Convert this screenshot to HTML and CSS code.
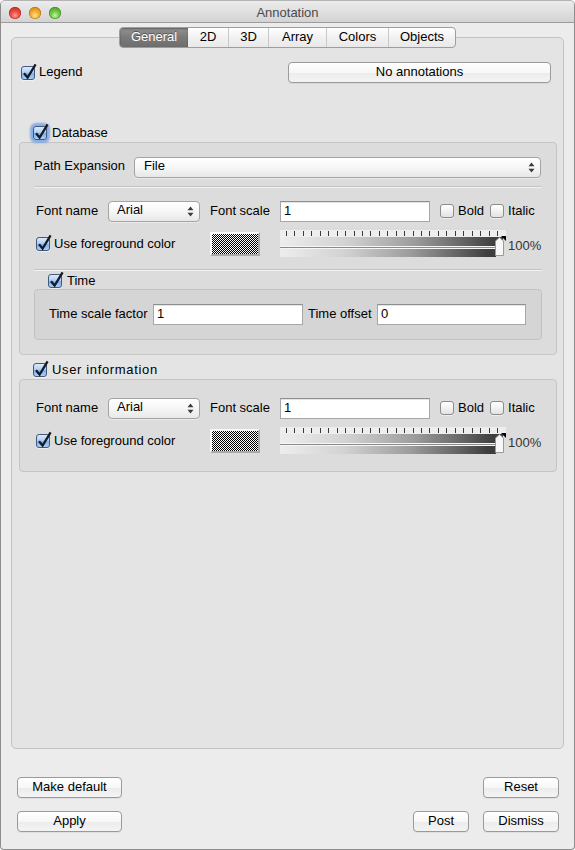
FILE: index.html
```html
<!DOCTYPE html>
<html>
<head>
<meta charset="utf-8">
<title>Annotation</title>
<link rel="stylesheet" href="styles.css">
</head>
<body>
<div class="window">
  <div class="titlebar">
    <div class="lights"><span class="light red"></span><span class="light yellow"></span><span class="light green"></span></div>
    <div class="title">Annotation</div>
    <div></div>
  </div>

  <div class="tabs">
    <div class="tabgroup">
      <div class="tab active t-general">General</div>
      <div class="tab t-2d">2D</div>
      <div class="tab sep t-3d">3D</div>
      <div class="tab sep t-array">Array</div>
      <div class="tab sep t-colors">Colors</div>
      <div class="tab sep t-objects">Objects</div>
    </div>
  </div>

  <div class="pane">
    <div class="legend-row">
      <span class="cb on"><svg class="tick" viewBox="0 0 14 14"><path d="M3 7.2 L6.6 11.6 L14.6 -1.6"/></svg></span>
      <span class="lbl ml4">Legend</span>
      <div class="btn btn-annot">No annotations</div>
    </div>

    <div class="group-title db-title">
      <span class="cb on focus"><svg class="tick" viewBox="0 0 14 14"><path d="M3 7.2 L6.6 11.6 L14.6 -1.6"/></svg></span>
      <span class="lbl ml5">Database</span>
    </div>
    <div class="group db-group">
      <div class="row path-row">
        <span class="lbl w-pe">Path Expansion</span>
        <div class="combo combo-path"><span>File</span><svg class="arrows" viewBox="0 0 7 11"><path d="M0.5 4.2 L3.5 0.6 L6.5 4.2 Z M0.5 6.8 L3.5 10.4 L6.5 6.8 Z"/></svg></div>
      </div>
      <div class="sep-line sep1"></div>
      <div class="row font-row">
        <span class="lbl w-fn">Font name</span>
        <div class="combo combo-font"><span>Arial</span><svg class="arrows" viewBox="0 0 7 11"><path d="M0.5 4.2 L3.5 0.6 L6.5 4.2 Z M0.5 6.8 L3.5 10.4 L6.5 6.8 Z"/></svg></div>
        <span class="lbl w-fs">Font scale</span>
        <div class="field w-scale">1</div>
        <span class="cb ml10"></span><span class="lbl ml4">Bold</span>
        <span class="cb ml6"></span><span class="lbl ml4">Italic</span>
      </div>
      <div class="row color-row">
        <span class="cb on"><svg class="tick" viewBox="0 0 14 14"><path d="M3 7.2 L6.6 11.6 L14.6 -1.6"/></svg></span>
        <span class="lbl ml4 w-fg">Use foreground color</span>
        <div class="swatch"></div>
        <div class="slider">
          <div class="ticks"><i></i><i></i><i></i><i></i><i></i><i></i><i></i><i></i><i></i><i></i><i></i><i></i><i></i><i></i><i></i><i></i><i></i><i></i><i></i><i></i><i></i><i></i><i></i><i></i><i></i><i></i></div>
          <div class="band band1"></div>
          <div class="groove"></div>
          <div class="band band2"></div>
          <svg class="handle" viewBox="0 0 12 22"><path class="corner" d="M6 0 L11 0 L11 5 Z"/><path class="knob" d="M0.5 5 L4.5 1.5 L8.5 5 L8.5 19.5 L0.5 19.5 Z"/></svg>
        </div>
        <span class="pct">100%</span>
      </div>
      <div class="sep-line sep2"></div>
      <div class="group-title time-title">
        <span class="cb on"><svg class="tick" viewBox="0 0 14 14"><path d="M3 7.2 L6.6 11.6 L14.6 -1.6"/></svg></span>
        <span class="lbl ml5">Time</span>
      </div>
      <div class="group time-group">
        <div class="row time-row">
          <span class="lbl w-tsf">Time scale factor</span>
          <div class="field w-tsfield">1</div>
          <span class="lbl w-to">Time offset</span>
          <div class="field grow">0</div>
        </div>
      </div>
    </div>

    <div class="group-title ui-title">
      <span class="cb on"><svg class="tick" viewBox="0 0 14 14"><path d="M3 7.2 L6.6 11.6 L14.6 -1.6"/></svg></span>
      <span class="lbl ml5 wide-title">User information</span>
    </div>
    <div class="group ui-group">
      <div class="row font-row">
        <span class="lbl w-fn">Font name</span>
        <div class="combo combo-font"><span>Arial</span><svg class="arrows" viewBox="0 0 7 11"><path d="M0.5 4.2 L3.5 0.6 L6.5 4.2 Z M0.5 6.8 L3.5 10.4 L6.5 6.8 Z"/></svg></div>
        <span class="lbl w-fs">Font scale</span>
        <div class="field w-scale">1</div>
        <span class="cb ml10"></span><span class="lbl ml4">Bold</span>
        <span class="cb ml6"></span><span class="lbl ml4">Italic</span>
      </div>
      <div class="row color-row">
        <span class="cb on"><svg class="tick" viewBox="0 0 14 14"><path d="M3 7.2 L6.6 11.6 L14.6 -1.6"/></svg></span>
        <span class="lbl ml4 w-fg">Use foreground color</span>
        <div class="swatch"></div>
        <div class="slider">
          <div class="ticks"><i></i><i></i><i></i><i></i><i></i><i></i><i></i><i></i><i></i><i></i><i></i><i></i><i></i><i></i><i></i><i></i><i></i><i></i><i></i><i></i><i></i><i></i><i></i><i></i><i></i><i></i></div>
          <div class="band band1"></div>
          <div class="groove"></div>
          <div class="band band2"></div>
          <svg class="handle" viewBox="0 0 12 22"><path class="corner" d="M6 0 L11 0 L11 5 Z"/><path class="knob" d="M0.5 5 L4.5 1.5 L8.5 5 L8.5 19.5 L0.5 19.5 Z"/></svg>
        </div>
        <span class="pct">100%</span>
      </div>
    </div>
  </div>

  <div class="footer">
    <div class="frow">
      <div class="btn b-wide">Make default</div>
      <div class="btn b-mid">Reset</div>
    </div>
    <div class="frow frow2">
      <div class="btn b-wide">Apply</div>
      <div class="fright">
        <div class="btn b-small">Post</div>
        <div class="btn b-mid">Dismiss</div>
      </div>
    </div>
  </div>
</div>
</body>
</html>
```

FILE: styles.css
```css
* { box-sizing: border-box; }
html { background: #ffffff; }
body {
  margin: 0;
  width: 575px;
  height: 850px;
  font-family: "Liberation Sans", Arial, sans-serif;
  font-size: 13px;
  color: #000;
}
.window {
  width: 575px;
  height: 850px;
  background: #ececec;
  border: 1px solid #8d8d8d;
  border-top-color: #b4b4b4;
  border-radius: 5px 5px 4px 4px;
  overflow: hidden;
}

/* title bar */
.titlebar {
  height: 22px;
  display: grid;
  grid-template-columns: 1fr auto 1fr;
  background: linear-gradient(#ececec, #d3d3d3);
  border-bottom: 1px solid #9c9c9c;
}
.lights { display: flex; gap: 8px; padding: 6px 0 0 8px; }
.light {
  width: 12px; height: 12px; border-radius: 50%;
  display: block;
}
.red {
  background: radial-gradient(circle at 50% 70%, #ff9f90 0, #f0554a 35%, #d0322a 75%, #a8261f 100%);
  box-shadow: inset 0 0 0 0.5px #9e2a24;
}
.yellow {
  background: radial-gradient(circle at 50% 70%, #ffe39a 0, #f4b43a 35%, #d88e16 75%, #a86d10 100%);
  box-shadow: inset 0 0 0 0.5px #a26c14;
}
.green {
  background: radial-gradient(circle at 50% 70%, #c8f5a8 0, #78cc4c 35%, #4fa92e 75%, #3a8722 100%);
  box-shadow: inset 0 0 0 0.5px #3b7d25;
}
.title {
  line-height: 22px;
  padding-top: 1px;
  color: #4a4a4a;
  font-size: 13px;
}

/* tabs */
.tabs {
  display: flex;
  justify-content: center;
  margin-top: 4px;
  margin-bottom: -11px;
  position: relative;
  z-index: 1;
}
.tabgroup {
  display: flex;
  height: 21px;
  border: 1px solid #9d9d9d;
  border-radius: 4px;
  overflow: hidden;
  background: linear-gradient(#ffffff, #f1f1f1 50%, #e9e9e9);
}
.tab {
  line-height: 18px;
  text-align: center;
  color: #000;
}
.tab.sep { border-left: 1px solid #c8c8c8; }
.tab.active {
  background: linear-gradient(#929292, #7a7a7a 50%, #6e6e6e);
  color: #fff;
  text-shadow: 0 -1px 0 #555;
  box-shadow: inset 0 1px 2px rgba(0,0,0,0.35);
}
.t-general { width: 68px; }
.t-2d { width: 40px; }
.t-3d { width: 40px; }
.t-array { width: 58px; }
.t-colors { width: 62px; }
.t-objects { width: 67px; }

/* pane */
.pane {
  margin: 0 10px;
  height: 712px;
  border: 1px solid #c2c2c2;
  border-radius: 5px;
  background: #e4e4e4;
  padding: 24px 6px 0 7px;
}
.legend-row {
  display: flex;
  align-items: center;
  height: 21px;
  padding: 0 6px 0 2px;
}
.legend-row .lbl { margin-top: -2px; }
.btn-annot { width: 263px; margin-left: auto; }

.lbl { white-space: nowrap; line-height: 16px; }
.ml4 { margin-left: 4px; }
.ml5 { margin-left: 5px; }
.ml6 { margin-left: 6px; }
.ml10 { margin-left: 10px; }
.wide-title { letter-spacing: 0.65px; }

/* checkbox */
.cb {
  position: relative;
  display: block;
  flex: none;
  width: 14px;
  height: 14px;
  border: 1px solid #8c8c8c;
  border-radius: 3px;
  background: linear-gradient(#ffffff, #f2f2f2 50%, #e2e2e2);
  box-shadow: 0 1px 0 rgba(255,255,255,0.5);
}
.cb.on {
  border-color: #41597c;
  background: linear-gradient(#dcebfb 0%, #b0cff3 45%, #7fb0ec 55%, #a9d0f7 100%);
}
.cb.focus {
  box-shadow: 0 0 0 1px #86aee8, 0 0 2px 3px rgba(95,145,225,0.65);
}
.tick {
  position: absolute;
  left: -1px;
  top: -1px;
  width: 14px;
  height: 14px;
  overflow: visible;
}
.tick path {
  fill: none;
  stroke: #141b27;
  stroke-width: 2.3;
  stroke-linejoin: miter;
}

/* group boxes */
.group-title {
  display: flex;
  align-items: center;
  height: 18px;
}
.db-title { margin-top: 41px; padding-left: 14px; }
.ui-title { margin-top: 6px; padding-left: 14px; }
.time-title { padding-left: 14px; padding-top: 2px; }
.group {
  border: 1px solid #c5c5c5;
  border-radius: 4px;
}
.db-group {
  background: #dcdcdc;
  padding: 14px 14px 14px 14px;
}
.ui-group {
  background: #dcdcdc;
  padding: 17px 14px 16px 14px;
}
.time-group {
  background: #d5d5d5;
  border-color: #c2c2c2;
  padding: 14px 15px 14px 14px;
}

.row { display: flex; align-items: center; }
.row .lbl { margin-top: -1px; }
.path-row { height: 21px; }
.path-row .lbl { margin-top: -3px; }
.w-pe { width: 100px; }
.combo-path { flex: 1; margin-right: 1px; padding-left: 9px; }

.sep-line {
  height: 2px;
  border-top: 1px solid #c4c4c4;
  border-bottom: 1px solid #f3f3f3;
}
.sep1 { margin-top: 8px; }
.sep2 { margin-top: 11px; }

.font-row { height: 22px; padding-left: 2px; }
.db-group .font-row { margin-top: 12px; }
.color-row { height: 28px; padding-left: 2px; margin-top: 8px; }
.w-fn { width: 72px; }
.w-fs { width: 70px; margin-left: 10px; }
.w-scale { width: 150px; }
.w-fg { width: 156px; }

/* combo box */
.combo {
  display: flex;
  align-items: center;
  height: 21px;
  border: 1px solid #a3a3a3;
  border-radius: 4px;
  background: linear-gradient(#ffffff, #f6f6f6 50%, #e8e8e8);
  box-shadow: 0 1px 0 rgba(255,255,255,0.4);
}
.combo span { line-height: 16px; margin-top: -3px; }
.combo-font { width: 92px; padding-left: 8px; }
.arrows {
  width: 7px;
  height: 11px;
  margin-left: auto;
  margin-right: 5px;
  flex: none;
}
.arrows path { fill: #3c3c3c; }

/* text field */
.field {
  height: 21px;
  background: #fff;
  border: 1px solid #a7a7a7;
  border-top-color: #8f8f8f;
  box-shadow: inset 0 1px 0 #e4e4e4;
  padding-left: 3px;
  line-height: 18px;
}
.grow { flex: 1; }

/* time row */
.time-row { height: 21px; }
.w-tsf { width: 104px; }
.w-tsfield { width: 150px; }
.w-to { width: 69px; margin-left: 5px; }

/* swatch */
.swatch {
  width: 50px;
  height: 24px;
  border: 2px solid;
  border-color: #f7f7f7 #a9a9a9 #a9a9a9 #f7f7f7;
  background: repeating-conic-gradient(#000 0% 25%, #fff 0% 50%) 0 0 / 2px 2px;
}

/* slider */
.slider {
  position: relative;
  width: 226px;
  height: 28px;
  margin-left: 20px;
}
.ticks {
  height: 7px;
  background: #eeeeee;
  display: flex;
  justify-content: space-between;
  padding: 1px 8px 0 6px;
}
.ticks i {
  display: block;
  width: 1px;
  height: 5px;
  background: #3a3a3a;
}
.band {
  background:
    radial-gradient(circle, rgba(255,255,255,0.5) 0.5px, transparent 0.9px) 0 0 / 2px 2px,
    linear-gradient(to right, #e8e8e8 0%, #c4c4c4 30%, #7e7e7e 60%, #2a2a2a 85%, #000 96%);
  margin-right: 3px;
}
.band1 { height: 9px; }
.groove {
  height: 3px;
  border-top: 1px solid #f6f6f6;
  border-bottom: 1px solid #f6f6f6;
  background: #8a8a8a;
  margin-right: 10px;
}
.band2 { height: 8px; margin-right: 10px; }
.handle {
  position: absolute;
  left: 215px;
  top: 6px;
  width: 12px;
  height: 22px;
  overflow: visible;
}
.handle .corner { fill: #000; }
.handle .knob { fill: #f7f7f7; stroke: #9a9a9a; stroke-width: 1; }
.pct {
  margin-left: 2px;
  padding-top: 3px;
  color: #333;
  white-space: nowrap;
}

/* buttons */
.btn {
  height: 21px;
  border: 1px solid #9a9a9a;
  border-radius: 4px;
  background: linear-gradient(#ffffff, #f7f7f7 50%, #ececec 55%, #f4f4f4);
  text-align: center;
  line-height: 17px;
  white-space: nowrap;
  box-shadow: 0 1px 0 rgba(0,0,0,0.05);
}

/* footer */
.footer {
  margin-top: 28px;
  padding: 0 15px 0 16px;
}
.frow {
  display: flex;
  justify-content: space-between;
}
.frow2 { margin-top: 13px; }
.fright { display: flex; gap: 14px; }
.b-wide { width: 105px; }
.b-mid { width: 76px; }
.b-small { width: 56px; }
```
